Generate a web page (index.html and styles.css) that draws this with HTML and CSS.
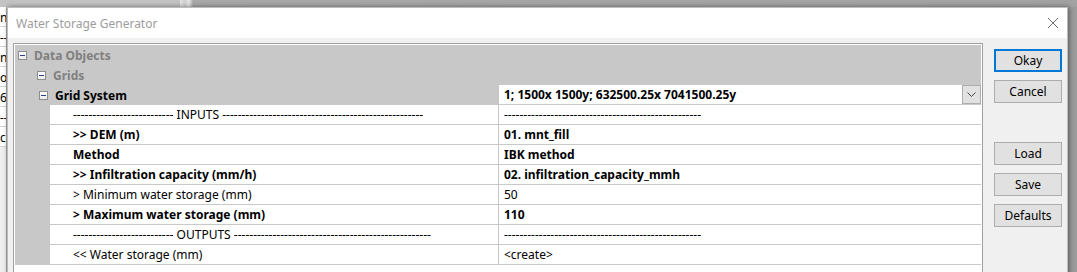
FILE: index.html
```html
<!DOCTYPE html>
<html>
<head>
<meta charset="utf-8">
<link rel="stylesheet" href="styles.css">
</head>
<body>
<div class="desktop">
  <div class="bgapp">
    <div class="bgrow">n</div>
    <div class="bgrow">--</div>
    <div class="bgrow">n</div>
    <div class="bgrow">o</div>
    <div class="bgrow">60</div>
    <div class="bgrow">--</div>
    <div class="bgrow">cr</div>
  </div>
  <div class="dialog">
    <div class="titlebar">
      <span class="title">Water Storage Generator</span>
      <span class="close"><svg width="12" height="12" viewBox="0 0 12 12"><path d="M1 1 L11 11 M11 1 L1 11" stroke="#707070" stroke-width="1" fill="none"/></svg></span>
    </div>
    <div class="body">
      <div class="gridbox">
        <div class="trow lvl0"><span class="minus"></span><span class="tlabel muted">Data Objects</span></div>
        <div class="trow lvl1"><span class="minus"></span><span class="tlabel muted">Grids</span></div>
        <div class="trow sysrow">
          <div class="syslabel"><span class="minus"></span><span class="tlabel">Grid System</span></div>
          <div class="sysval"><span class="b">1; 1500x 1500y; 632500.25x 7041500.25y</span><span class="drop"><svg width="9" height="5" viewBox="0 0 9 5"><path d="M0.5 0.5 L4.5 4.5 L8.5 0.5" stroke="#444" stroke-width="1" fill="none"/></svg></span></div>
        </div>
        <div class="prow"><div class="ind"></div><div class="lab">-------------------------- INPUTS ----------------------------------------------------</div><div class="val">---------------------------------------------------</div></div>
        <div class="prow"><div class="ind"></div><div class="lab b">&gt;&gt; DEM (m)</div><div class="val b">01. mnt_fill</div></div>
        <div class="prow"><div class="ind"></div><div class="lab b">Method</div><div class="val b">IBK method</div></div>
        <div class="prow"><div class="ind"></div><div class="lab b">&gt;&gt; Infiltration capacity (mm/h)</div><div class="val b">02. infiltration_capacity_mmh</div></div>
        <div class="prow"><div class="ind"></div><div class="lab">&gt; Minimum water storage (mm)</div><div class="val">50</div></div>
        <div class="prow"><div class="ind"></div><div class="lab b">&gt; Maximum water storage (mm)</div><div class="val b">110</div></div>
        <div class="prow"><div class="ind"></div><div class="lab">-------------------------- OUTPUTS ---------------------------------------------------</div><div class="val">---------------------------------------------------</div></div>
        <div class="prow"><div class="ind"></div><div class="lab">&lt;&lt; Water storage (mm)</div><div class="val">&lt;create&gt;</div></div>
      </div>
      <div class="buttons">
        <div class="btn default">Okay</div>
        <div class="btn">Cancel</div>
        <div class="btn gap">Load</div>
        <div class="btn">Save</div>
        <div class="btn">Defaults</div>
      </div>
    </div>
  </div>
</div>
</body>
</html>
```
FILE: styles.css
```css
* { box-sizing: border-box; }
html, body { margin: 0; padding: 0; }
body {
  width: 1077px;
  height: 272px;
  overflow: hidden;
  font-family: "Noto Sans", "Open Sans", sans-serif;
  font-size: 12px;
  color: #000;
}
.desktop {
  position: relative;
  width: 1077px;
  height: 272px;
  overflow: hidden;
  background-color: #9b9b9b;
  background-image: linear-gradient(90deg, #c3c3c3 0, #c3c3c3 180px, #e6e6e6 180px, #cfcfcf 185px, #e6e6e6 189px, #a8a8a8 193px, #a2a2a2 100%);
  background-size: 100% 7px;
  background-repeat: no-repeat;
}
.bgapp {
  position: absolute;
  left: 0;
  top: 7px;
  width: 7px;
  height: 265px;
  background: #efefef;
  border-right: 1px solid #a6a6a6;
  overflow: hidden;
}
.bgrow {
  width: 6px;
  height: 20px;
  line-height: 21px;
  background: #fff;
  border-bottom: 1px solid #d4d4d4;
  white-space: nowrap;
  overflow: hidden;
  font-size: 12px;
}
.dialog {
  position: absolute;
  left: 7px;
  top: 7px;
  width: 1061px;
  height: 285px;
  background: #f0f0f0;
  border: 1px solid #bdbdbd;
  box-shadow: 1px 0 5px rgba(0, 0, 0, 0.45);
}
.titlebar {
  height: 30px;
  background: #fff;
  display: flex;
  align-items: center;
  justify-content: space-between;
  padding-left: 8px;
}
.title {
  color: #9d9d9d;
  font-size: 12px;
}
.close {
  width: 28px;
  height: 30px;
  display: flex;
  align-items: center;
  justify-content: center;
}
.body {
  display: flex;
  align-items: flex-start;
  padding: 5px 5px 0 5px;
}
.gridbox {
  width: 970px;
  height: 240px;
  border: 1px solid #a0a0a0;
  padding: 1px;
  background: #fff;
}
.trow {
  height: 20px;
  display: flex;
  align-items: center;
  background: #c8c8c8;
}
.lvl0 { padding-left: 3px; }
.lvl1 { padding-left: 22px; }
.minus {
  position: relative;
  width: 9px;
  height: 9px;
  border: 1px solid #8e8e8e;
  background: linear-gradient(#ffffff, #ececec);
  margin-right: 7px;
  flex: none;
}
.minus::after {
  content: "";
  position: absolute;
  left: 1px;
  top: 3px;
  width: 5px;
  height: 1px;
  background: #2b3f8f;
}
.tlabel { font-weight: bold; }
.muted { color: #808080; }
.sysrow { align-items: stretch; }
.syslabel {
  width: 484px;
  display: flex;
  align-items: center;
  padding-left: 24px;
}
.sysval {
  width: 482px;
  background: #fff;
  border-bottom: 1px solid #c8c8c8;
  display: flex;
  align-items: center;
  justify-content: space-between;
  padding-left: 5px;
}
.drop {
  width: 19px;
  height: 19px;
  align-self: flex-start;
  background: #e1e1e1;
  border: 1px solid #adadad;
  display: flex;
  align-items: center;
  justify-content: center;
}
.b { font-weight: bold; }
.prow {
  height: 20px;
  display: flex;
}
.ind {
  width: 35px;
  background: #c8c8c8;
}
.lab, .val {
  height: 20px;
  line-height: 19px;
  border-bottom: 1px solid #c8c8c8;
  white-space: nowrap;
  overflow: hidden;
}
.lab {
  width: 449px;
  padding-left: 23px;
  border-right: 1px solid #c8c8c8;
}
.val {
  width: 482px;
  padding-left: 5px;
}
.buttons {
  display: flex;
  flex-direction: column;
  gap: 8px;
  margin-left: 11px;
  padding-top: 6px;
  width: 68px;
}
.btn {
  height: 23px;
  background: #e1e1e1;
  border: 1px solid #adadad;
  display: flex;
  align-items: center;
  justify-content: center;
  font-size: 12px;
}
.btn.default {
  border: 2px solid #0078d7;
}
.btn.gap { margin-top: 31px; }
```
